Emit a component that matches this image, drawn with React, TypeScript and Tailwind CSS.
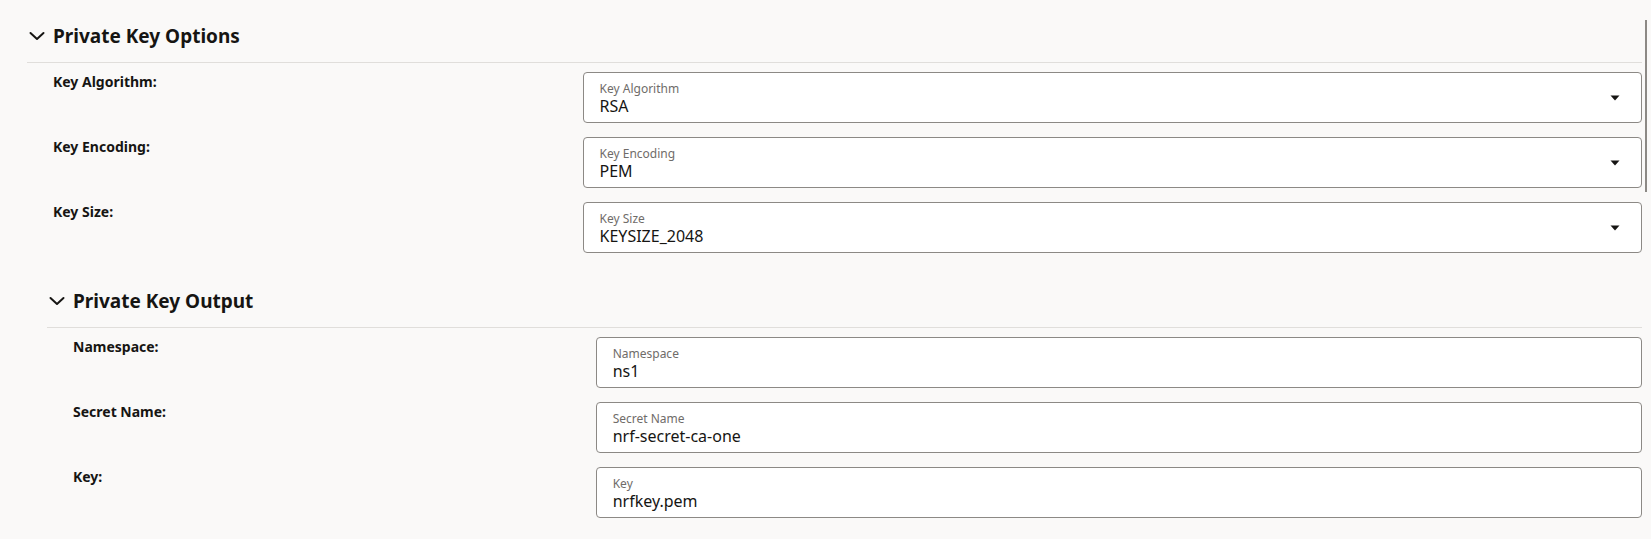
import { ReactNode } from 'react'

type Field = {
  label: string
  caption: string
  value: string
  select?: boolean
}

const keyOptions: Field[] = [
  { label: 'Key Algorithm:', caption: 'Key Algorithm', value: 'RSA', select: true },
  { label: 'Key Encoding:', caption: 'Key Encoding', value: 'PEM', select: true },
  { label: 'Key Size:', caption: 'Key Size', value: 'KEYSIZE_2048', select: true },
]

const keyOutput: Field[] = [
  { label: 'Namespace:', caption: 'Namespace', value: 'ns1' },
  { label: 'Secret Name:', caption: 'Secret Name', value: 'nrf-secret-ca-one' },
  { label: 'Key:', caption: 'Key', value: 'nrfkey.pem' },
]

function Chevron() {
  return (
    <svg width="16" height="16" viewBox="0 0 16 16" className="shrink-0">
      <polyline
        points="1.5,5 8,11 14.5,5"
        fill="none"
        stroke="#161513"
        strokeWidth="2"
        strokeLinecap="round"
        strokeLinejoin="round"
      />
    </svg>
  )
}

function Section({ title, className, children }: { title: string; className: string; children: ReactNode }) {
  return (
    <section className={className}>
      <div className="flex h-[63px] items-center border-b border-[#e0dedb] pt-[10px]">
        <span className="ml-[2px] flex w-[24px]">
          <Chevron />
        </span>
        <h2 className="text-[19px] font-bold leading-[28px] text-[#161513]">{title}</h2>
      </div>
      <div className="flex flex-col gap-[14px] pt-[9px]">{children}</div>
    </section>
  )
}

function Row({ field }: { field: Field }) {
  return (
    <div className="grid grid-cols-[34.4%_1fr] items-start">
      <label className="pl-[26px] pt-[3px] text-[14px] font-bold leading-[14px] text-[#161513]">{field.label}</label>
      <div className="flex h-[51px] items-center rounded-[4px] border border-[#8c8985] bg-white pl-[16px] pr-[21px]">
        <div className="flex flex-1 flex-col pt-[1px]">
          <span className="text-[12px] leading-[15px] text-[#6f6c69]">{field.caption}</span>
          <span className="text-[16px] leading-[20px] text-[#161513]">{field.value}</span>
        </div>
        {field.select && (
          <svg width="10" height="6" viewBox="0 0 10 6">
            <polygon points="0.5,0.5 9.5,0.5 5,5.5" fill="#161513" />
          </svg>
        )}
      </div>
    </div>
  )
}

export default function App() {
  return (
    <div className="relative min-h-screen bg-[#faf9f8] pb-[20px] font-['Noto_Sans',sans-serif]">
      <Section title="Private Key Options" className="ml-[27px] mr-[9px]">
        {keyOptions.map((f) => (
          <Row key={f.caption} field={f} />
        ))}
      </Section>
      <Section title="Private Key Output" className="ml-[47px] mr-[9px] mt-[12px]">
        {keyOutput.map((f) => (
          <Row key={f.caption} field={f} />
        ))}
      </Section>
      {/* scrollbar thumb */}
      <div className="absolute right-[4px] top-[20px] h-[172px] w-[2px] bg-[#8c8985]" />
    </div>
  )
}
